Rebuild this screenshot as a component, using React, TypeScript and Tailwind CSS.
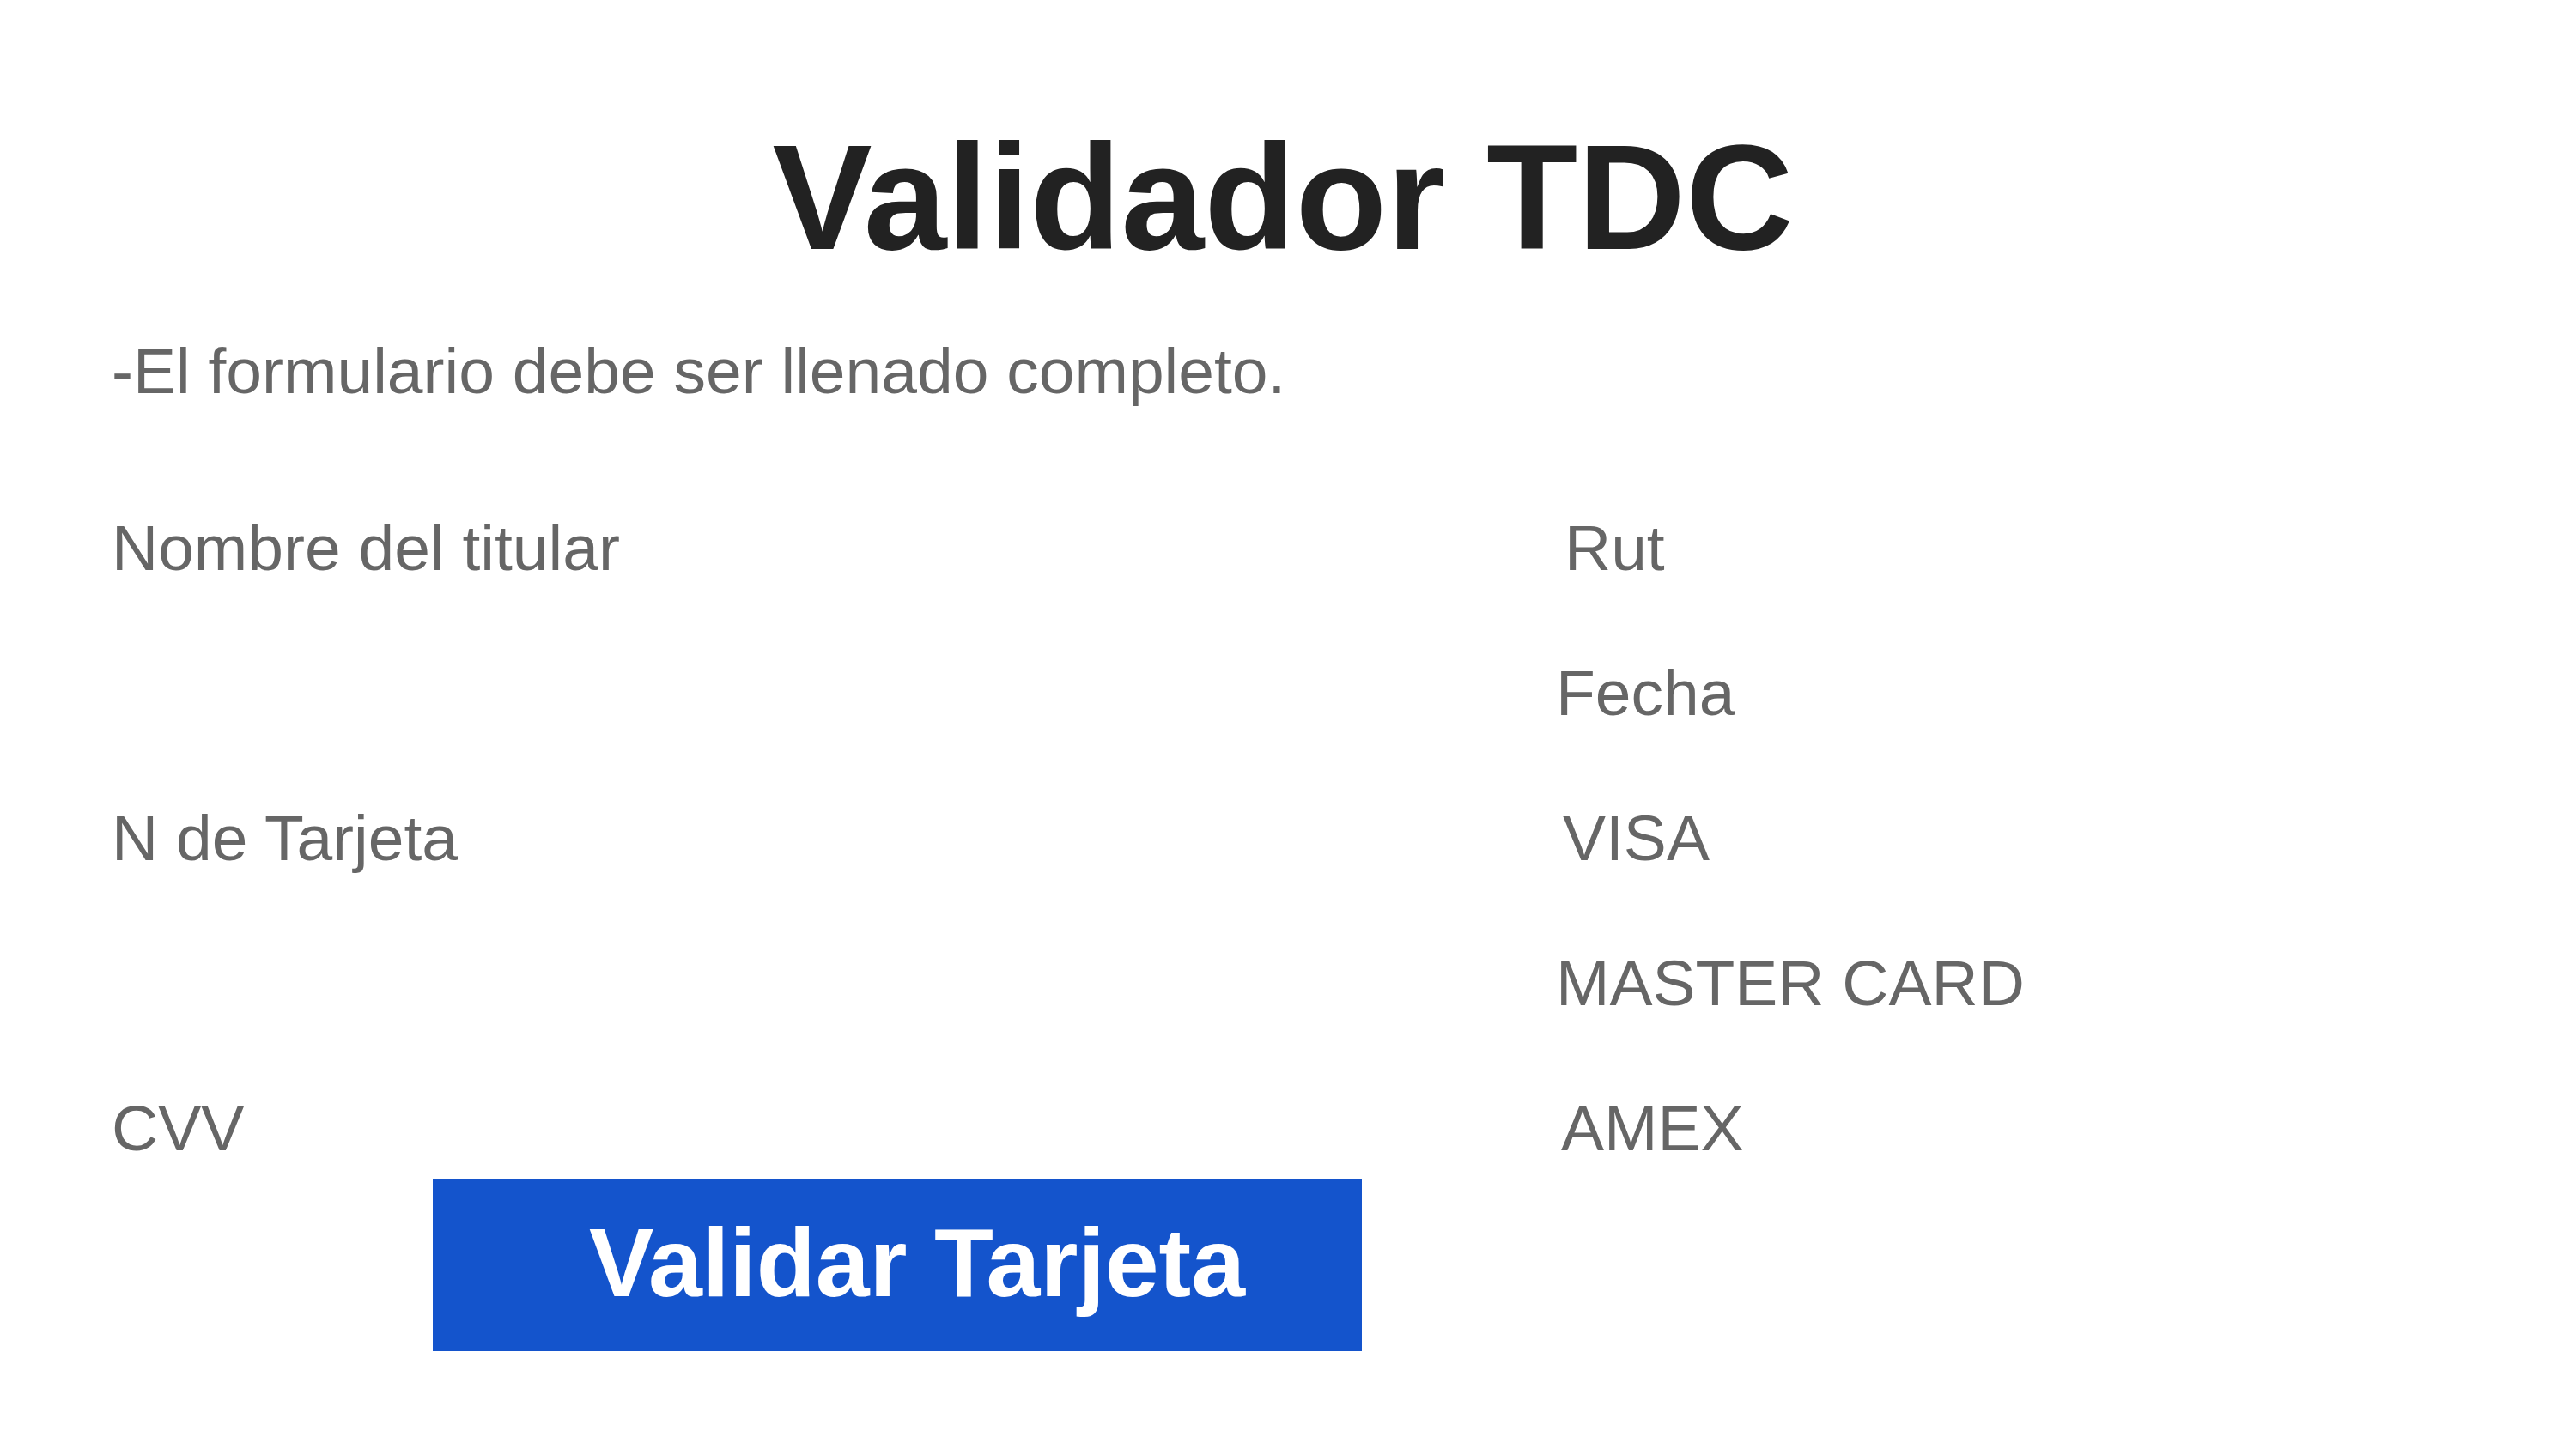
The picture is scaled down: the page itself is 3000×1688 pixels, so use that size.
import React from "react";

type Row = { left?: string; right: string; shift: string };

const rows: Row[] = [
  { left: "Nombre del titular", right: "Rut", shift: "ml-[10px]" },
  { right: "Fecha", shift: "ml-0" },
  { left: "N de Tarjeta", right: "VISA", shift: "ml-[8px]" },
  { right: "MASTER CARD", shift: "ml-0" },
  { left: "CVV", right: "AMEX", shift: "ml-[6px]" },
];

export default function App() {
  return (
    <div className="w-full h-[1688px] bg-white font-['Liberation_Sans',Arial,sans-serif] flex flex-col">
      {/* Title */}
      <h1 className="mt-[143px] pr-[12px] text-center text-[174px] leading-none font-bold text-[#222222]">
        Validador TDC
      </h1>

      <p className="mt-[78px] pl-[130px] text-[75px] leading-none text-[#666666]">
        -El formulario debe ser llenado completo.
      </p>

      {/* Form labels */}
      <div className="mt-[131px] pl-[130px] grid grid-cols-[1682px_1fr] gap-y-[94px]">
        {rows.map((row, i) => (
          <React.Fragment key={i}>
            <div className="text-[75px] leading-none text-[#666666] h-[75px]">{row.left ?? ""}</div>
            <div className={`text-[75px] leading-none text-[#666666] h-[75px] ${row.shift}`}>{row.right}</div>
          </React.Fragment>
        ))}
      </div>

      <div className="mt-[22px] ml-[504px]">
        <button className="w-[1082px] h-[200px] bg-[#1454CC] text-white font-bold text-[113px] leading-none flex items-center justify-center pl-[46px] pb-[6px]">
          Validar Tarjeta
        </button>
      </div>
    </div>
  );
}
